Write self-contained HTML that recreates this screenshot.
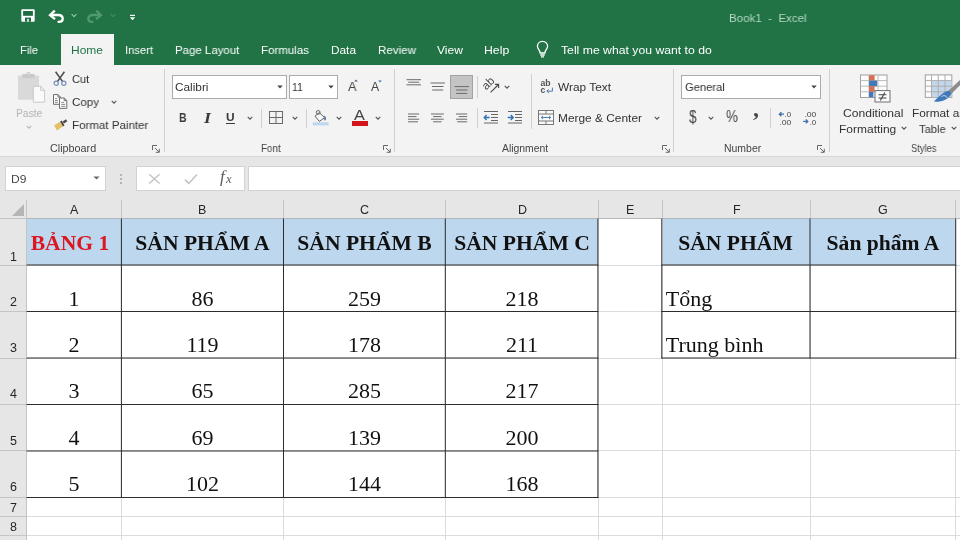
<!DOCTYPE html>
<html lang="vi"><head><meta charset="utf-8"><title>Book1 - Excel</title>
<style>
*{box-sizing:border-box;margin:0;padding:0}
html,body{width:960px;height:540px;overflow:hidden;background:#fff}
body{position:relative;font-family:"Liberation Sans",sans-serif;font-size:12px;color:#262626}
.abs,.t,.ic,.sep,.box,.gl,.bd,.hl,.cell,.rh,.ch{position:absolute}
.t{will-change:transform;white-space:pre;line-height:16px;transform-origin:0 0}
#title{left:0;top:0;width:960px;height:65px;background:#217346}
#hometab{left:61px;top:34px;width:53px;height:31px;background:#f3f3f3}
.tab{color:#fff;font-size:12.5px;top:42px}
#ribbon{left:0;top:65px;width:960px;height:92px;background:#f3f3f3}
#band{left:0;top:157px;width:960px;height:43px;background:#e6e6e6}
#bandtop{left:0;top:156px;width:960px;height:1px;background:#d6d6d6}
.sep{width:1px;background:#d2d2d2}
.box{background:#fff;border:1px solid #ababab}
.lbl{font-size:11px;color:#333}
.rt{font-size:12.5px;color:#262626}
/* sheet */
#sheet{left:0;top:200px;width:960px;height:340px;background:#fff}
.ch{top:200px;height:18px;background:#e6e6e6;color:#333;font-size:12.5px;text-align:center;line-height:19px;border-right:1px solid #c6c6c6}
.rh{left:0;width:26px;background:#e6e6e6;color:#333;font-size:12.5px;text-align:center;border-bottom:1px solid #c6c6c6}
.rh span{position:absolute;left:0;right:0;bottom:2px;line-height:14px}
.gl{background:#dbdbdb}
.bd{background:#2b2b2b}
.cell{will-change:transform;font-family:"Liberation Serif",serif;font-size:22px;line-height:24px;white-space:nowrap;color:#111;text-align:center}
.hdr{font-size:12.5px;color:#333}
</style></head><body>
<div class="abs" id="title"></div>
<div class="abs" id="hometab"></div>
<div class="abs" id="ribbon"></div>
<div class="abs" id="bandtop"></div>
<div class="abs" id="band"></div>
<span class="t" style="left:20.30px;top:41.71px;font-size:11.8px;color:#ffffff;transform:scaleX(0.9475);">File</span>
<span class="t" style="left:125.00px;top:41.71px;font-size:11.8px;color:#ffffff;transform:scaleX(0.9492);">Insert</span>
<span class="t" style="left:175.00px;top:41.71px;font-size:11.8px;color:#ffffff;transform:scaleX(0.9705);">Page Layout</span>
<span class="t" style="left:261.00px;top:41.71px;font-size:11.8px;color:#ffffff;transform:scaleX(0.9755);">Formulas</span>
<span class="t" style="left:330.70px;top:41.71px;font-size:11.8px;color:#ffffff;transform:scaleX(1.0017);">Data</span>
<span class="t" style="left:377.70px;top:41.71px;font-size:11.8px;color:#ffffff;transform:scaleX(0.9818);">Review</span>
<span class="t" style="left:436.70px;top:41.71px;font-size:11.8px;color:#ffffff;transform:scaleX(1.0248);">View</span>
<span class="t" style="left:484.20px;top:41.71px;font-size:11.8px;color:#ffffff;transform:scaleX(1.0392);">Help</span>
<span class="t" style="left:561.00px;top:41.71px;font-size:11.8px;color:#ffffff;transform:scaleX(1.0356);">Tell me what you want to do</span>
<span class="t" style="left:71.00px;top:41.71px;font-size:11.8px;color:#217346;transform:scaleX(1.0157);">Home</span>
<span class="t" style="left:728.70px;top:9.61px;font-size:11.8px;color:#b4d8c3;transform:scaleX(0.9779);">Book1  -  Excel</span>
<svg class="abs" style="left:21px;top:9.4px" width="14" height="13" viewBox="0 0 14 13">
<rect x="0.3" y="0.3" width="13.4" height="12.4" rx="1" fill="#fff"/>
<rect x="2.1" y="2" width="9.8" height="4.8" fill="#1f6b41"/>
<rect x="4" y="8.6" width="6" height="4.1" fill="#1f6b41"/><rect x="6.2" y="9.8" width="1.5" height="2.9" fill="#fff"/></svg>
<svg class="abs" style="left:48px;top:9px" width="18" height="15" viewBox="0 0 18 15" fill="none" stroke="#fff" stroke-width="2.3">
<path d="M6.8 1.6L2 6.1L7 10.2"/><path d="M2.4 6H10.2C13.2 6 14.7 7.7 14.7 9.7C14.7 11.8 13.2 12.9 10.9 12.9H9.6"/></svg>
<svg class="abs" style="left:71px;top:13px" width="6" height="5" viewBox="0 0 6 5" fill="none" stroke="#9cc9b0" stroke-width="1.1"><path d="M0.6 1L3 3.6L5.4 1"/></svg>
<svg class="abs" style="left:85.4px;top:9px" width="18" height="15" viewBox="0 0 18 15" fill="none" stroke="#4f9870" stroke-width="2.3">
<path d="M11.2 1.6L16 6.1L11 10.2"/><path d="M15.6 6H7.8C4.8 6 3.3 7.7 3.3 9.7C3.3 11.8 4.8 12.9 7.1 12.9H8.4"/></svg>
<svg class="abs" style="left:110px;top:13px" width="6" height="5" viewBox="0 0 6 5" fill="none" stroke="#438d63" stroke-width="1.1"><path d="M0.6 1L3 3.6L5.4 1"/></svg>
<svg class="abs" style="left:128.8px;top:14.4px" width="7" height="7" viewBox="0 0 7 7"><rect x="1" y="0.8" width="5" height="1.2" fill="#fff"/><path d="M0.8 3.2H6.2L3.5 6.2Z" fill="#fff"/></svg>
<svg class="abs" style="left:535px;top:40px" width="15" height="18" viewBox="0 0 15 18" fill="none" stroke="#fff" stroke-width="1.3">
<path d="M7.5 1.4C4.4 1.4 2.4 3.7 2.4 6.3C2.4 8.2 3.4 9.3 4.3 10.5C4.9 11.3 5.1 12 5.1 13H9.9C9.9 12 10.1 11.3 10.7 10.5C11.6 9.3 12.6 8.2 12.6 6.3C12.6 3.7 10.6 1.4 7.5 1.4Z"/><path d="M5.3 15H9.7M6 16.8H9"/></svg>
<svg class="abs" style="left:16px;top:70px" width="31" height="34" viewBox="0 0 31 34">
<rect x="2" y="5.4" width="21" height="24.4" rx="1" fill="#d9d9d9"/>
<path d="M6.4 8.2V4H10.2C10.2 1.2 14.8 1.2 14.8 4H18.6V8.2Z" fill="#c9c9c9"/><circle cx="12.5" cy="3.8" r="0.9" fill="#e8e8e8"/>
<path d="M17.3 16.3H24.6L28.6 20.3V32.2H17.3Z" fill="#fafafa" stroke="#c9c9c9" stroke-width="1"/>
<path d="M24.6 16.3V20.3H28.6" fill="none" stroke="#c9c9c9" stroke-width="1"/></svg>
<span class="t" style="left:15.60px;top:104.71px;font-size:11.8px;color:#b3b3b3;transform:scaleX(0.8757);">Paste</span>
<svg class="abs" style="left:24.8px;top:124.3px" width="8" height="6" viewBox="0 0 8 6" fill="none" stroke="#b8b8b8" stroke-width="1.1"><path d="M1.7000000000000002 1.8L4 4.2L6.3 1.8"/></svg>
<svg class="abs" style="left:52px;top:70px" width="16" height="17" viewBox="0 0 16 17" fill="none">
<path d="M3.6 1.8L10.6 11.6M12.4 1.8L5.4 11.6" stroke="#505050" stroke-width="1.6"/>
<circle cx="4.2" cy="13.2" r="2.1" stroke="#6f8fb8" stroke-width="1.2"/><circle cx="11.8" cy="13.2" r="2.1" stroke="#6f8fb8" stroke-width="1.2"/></svg>
<span class="t" style="left:72.00px;top:70.91px;font-size:11.8px;color:#333333;transform:scaleX(0.9374);">Cut</span>
<svg class="abs" style="left:52px;top:93px" width="17" height="17" viewBox="0 0 17 17" fill="none" stroke="#6e6e6e" stroke-width="1">
<path d="M1.5 1.6H6L8.5 4.1V11.3H1.5Z" fill="#fcfcfc"/><path d="M6 1.6V4.1H8.5" /><path d="M3 5.6H5.2M3 7.6H6M3 9.4H5.6" stroke="#8a8a8a"/>
<path d="M7.5 5H12.2L14.8 7.6V15.4H7.5Z" fill="#fcfcfc"/><path d="M12.2 5V7.6H14.8"/><path d="M9.2 9.4H12.2M9.2 11.4H13.2M9.2 13.4H13.2" stroke="#8a8a8a"/></svg>
<span class="t" style="left:72.10px;top:94.11px;font-size:11.8px;color:#333333;transform:scaleX(0.9799);">Copy</span>
<svg class="abs" style="left:109.5px;top:99px" width="8" height="6" viewBox="0 0 8 6" fill="none" stroke="#555" stroke-width="1.1"><path d="M1.7000000000000002 1.8L4 4.2L6.3 1.8"/></svg>
<svg class="abs" style="left:53px;top:118px" width="16" height="14" viewBox="0 0 16 14">
<path d="M1.2 7.4L7.2 3.6L9.9 8.6L3.9 12.4Z" fill="#e3bf67"/>
<path d="M7.2 3.6L8.8 2.6L11.5 7.6L9.9 8.6Z" fill="#4a4a4a"/>
<path d="M9.6 3.6L13 1.2L14.4 3.2L11 5.6Z" fill="#4a4a4a"/></svg>
<span class="t" style="left:72.00px;top:117.31px;font-size:11.8px;color:#333333;transform:scaleX(0.9788);">Format Painter</span>
<span class="t" style="left:49.80px;top:141.40px;font-size:10.4px;color:#444444;transform:scaleX(1.0379);">Clipboard</span>
<svg class="abs" style="left:152px;top:144.5px" width="8" height="8" viewBox="0 0 8 8" fill="none" stroke="#666" stroke-width="1"><path d="M0.5 5V0.5H5"/><path d="M3 3L7 7"/><path d="M7.3 3.8V7.3H3.8" /></svg>
<div class="abs" style="left:164px;top:69px;width:1px;height:83px;background:#d0d0d0"></div>
<div class="box" style="left:172px;top:75px;width:115px;height:24px"></div>
<div class="box" style="left:289px;top:75px;width:49px;height:24px"></div>
<span class="t" style="left:174.50px;top:79.21px;font-size:11.8px;color:#333333;transform:scaleX(1.0014);">Calibri</span>
<svg class="abs" style="left:277px;top:85px" width="6" height="4" viewBox="0 0 6 4"><path d="M0.3 0.5H5.7L3 3.5Z" fill="#444"/></svg>
<span class="t" style="left:292.30px;top:79.21px;font-size:11.8px;color:#333333;transform:scaleX(0.8719);">11</span>
<svg class="abs" style="left:328px;top:85px" width="6" height="4" viewBox="0 0 6 4"><path d="M0.3 0.5H5.7L3 3.5Z" fill="#444"/></svg>
<span class="t" style="left:347.50px;top:78.52px;font-size:13.5px;color:#444;transform:scaleX(0.9397);">A</span>
<svg class="abs" style="left:354.2px;top:79.2px" width="4" height="3" viewBox="0 0 4 3"><path d="M0.2 2.6L2 0.4L3.8 2.6Z" fill="#4a607c"/></svg>
<span class="t" style="left:370.60px;top:79.44px;font-size:12px;color:#444;transform:scaleX(1.0199);">A</span>
<svg class="abs" style="left:377.5px;top:79.6px" width="4" height="3" viewBox="0 0 4 3"><path d="M0.2 0.4L2 2.6L3.8 0.4Z" fill="#3f74b4"/></svg>
<span class="t" style="left:178.60px;top:109.69px;font-size:13.6px;color:#3a3a3a;transform:scaleX(0.7761);font-weight:bold;">B</span>
<span class="t" style="left:204.00px;top:109.61px;font-size:14.2px;color:#3a3a3a;transform:scaleX(1.2640);font-weight:bold;font-family:'Liberation Serif',serif;font-style:italic;">I</span>
<span class="t" style="left:226.20px;top:109.11px;font-size:11.8px;color:#3a3a3a;transform:scaleX(1.0122);font-weight:bold;">U</span>
<div class="abs" style="left:226px;top:123px;width:9px;height:1px;background:#3a3a3a"></div>
<svg class="abs" style="left:245.5px;top:115px" width="8" height="6" viewBox="0 0 8 6" fill="none" stroke="#555" stroke-width="1.1"><path d="M1.7000000000000002 1.8L4 4.2L6.3 1.8"/></svg>
<div class="abs" style="left:261px;top:109px;width:1px;height:19px;background:#d0d0d0"></div>
<svg class="abs" style="left:268px;top:110px" width="16" height="15" viewBox="0 0 16 15" fill="none" stroke="#6a6a6a" stroke-width="1"><rect x="1.5" y="1.5" width="13" height="12"/><path d="M8 1.5V13.5M1.5 7.5H14.5"/></svg>
<svg class="abs" style="left:290.5px;top:115px" width="8" height="6" viewBox="0 0 8 6" fill="none" stroke="#555" stroke-width="1.1"><path d="M1.7000000000000002 1.8L4 4.2L6.3 1.8"/></svg>
<div class="abs" style="left:306px;top:109px;width:1px;height:19px;background:#d0d0d0"></div>
<svg class="abs" style="left:312px;top:108.5px" width="18" height="17" viewBox="0 0 18 17" fill="none">
<path d="M7.2 3.6L12.6 8.6L7.4 12.4L3 7.2Z" fill="#fafafa" stroke="#5a5a5a" stroke-width="1"/>
<circle cx="6.2" cy="3.4" r="1.9" stroke="#5a5a5a" stroke-width="0.9"/>
<path d="M12 6.6C13.4 7 14 8.2 14 9.6C14 10.6 13.6 11.4 12.9 11.4C12.2 11.4 11.9 10.6 12.2 9.8L12.6 8.6Z" fill="#4f6f94"/>
<rect x="0.8" y="13.2" width="15.8" height="3.2" fill="#bdd7ee"/></svg>
<svg class="abs" style="left:335px;top:115px" width="8" height="6" viewBox="0 0 8 6" fill="none" stroke="#555" stroke-width="1.1"><path d="M1.7000000000000002 1.8L4 4.2L6.3 1.8"/></svg>
<span class="t" style="left:354.30px;top:107.35px;font-size:14px;color:#444;transform:scaleX(1.1620);">A</span>
<div class="abs" style="left:352px;top:121px;width:16px;height:4.5px;background:#d4141c"></div>
<svg class="abs" style="left:374px;top:115px" width="8" height="6" viewBox="0 0 8 6" fill="none" stroke="#555" stroke-width="1.1"><path d="M1.7000000000000002 1.8L4 4.2L6.3 1.8"/></svg>
<span class="t" style="left:260.50px;top:141.40px;font-size:10.4px;color:#444444;transform:scaleX(0.9375);">Font</span>
<svg class="abs" style="left:382.5px;top:144.5px" width="8" height="8" viewBox="0 0 8 8" fill="none" stroke="#666" stroke-width="1"><path d="M0.5 5V0.5H5"/><path d="M3 3L7 7"/><path d="M7.3 3.8V7.3H3.8" /></svg>
<div class="abs" style="left:394px;top:69px;width:1px;height:83px;background:#d0d0d0"></div>
<svg class="abs" style="left:0;top:0" width="960" height="160" viewBox="0 0 960 160" fill="none" stroke="#6a6a6a" stroke-width="1"><path d="M406.5 79.7H421.0M408.2 82.2H419.2M406.5 84.8H421.0"/></svg>
<svg class="abs" style="left:0;top:0" width="960" height="160" viewBox="0 0 960 160" fill="none" stroke="#6a6a6a" stroke-width="1"><path d="M430.5 83.0H445.0M432.0 86.5H443.5M432.2 90.0H443.2"/></svg>
<div class="abs" style="left:450px;top:75px;width:23px;height:23.5px;background:#c4c4c4;border:1px solid #a2a2a2"></div>
<svg class="abs" style="left:0;top:0" width="960" height="160" viewBox="0 0 960 160" fill="none" stroke="#6a6a6a" stroke-width="1"><path d="M454.5 86.6H469.0M456.0 90.0H467.5M456.2 93.4H467.2"/></svg>
<div class="abs" style="left:477px;top:76px;width:1px;height:22px;background:#d0d0d0"></div>
<svg class="abs" style="left:482px;top:77px" width="19" height="18" viewBox="0 0 19 18" fill="none">
<text x="0" y="0" font-family="Liberation Sans, sans-serif" font-size="11.5" fill="#4a4a4a" transform="translate(4.2 13.6) rotate(-45)">ab</text>
<path d="M8.6 15.4L16 8" stroke="#4a4a4a" stroke-width="1.1"/><path d="M13 7.4H16.6V11" stroke="#4a4a4a" stroke-width="1.1"/></svg>
<svg class="abs" style="left:503px;top:83.5px" width="8" height="6" viewBox="0 0 8 6" fill="none" stroke="#555" stroke-width="1.1"><path d="M1.7000000000000002 1.8L4 4.2L6.3 1.8"/></svg>
<div class="abs" style="left:530.5px;top:74px;width:1px;height:55px;background:#d0d0d0"></div>
<svg class="abs" style="left:539px;top:77.5px" width="16" height="17" viewBox="0 0 16 17" fill="none">
<text x="1.4" y="8.4" font-family="Liberation Sans, sans-serif" font-size="8.6" font-weight="bold" fill="#555" textLength="10.2" lengthAdjust="spacingAndGlyphs">ab</text>
<text x="1.4" y="15.2" font-family="Liberation Sans, sans-serif" font-size="8.6" font-weight="bold" fill="#555">c</text>
<path d="M13.4 9.6V13.2H8" stroke="#4c78b4" stroke-width="1"/><path d="M9.8 11.4L7.8 13.2L9.8 15" stroke="#4c78b4" stroke-width="1"/></svg>
<span class="t" style="left:558.00px;top:78.61px;font-size:11.8px;color:#333333;transform:scaleX(1.0059);">Wrap Text</span>
<svg class="abs" style="left:0;top:0" width="960" height="160" viewBox="0 0 960 160" fill="none" stroke="#6a6a6a" stroke-width="1"><path d="M408.0 114.0H419.2M408.0 116.6H416.5M408.0 119.2H419.2M408.0 121.8H418.0"/></svg>
<svg class="abs" style="left:0;top:0" width="960" height="160" viewBox="0 0 960 160" fill="none" stroke="#6a6a6a" stroke-width="1"><path d="M431.0 114.0H443.8M433.1 116.6H441.6M431.0 119.2H443.8M433.1 121.8H441.6"/></svg>
<svg class="abs" style="left:0;top:0" width="960" height="160" viewBox="0 0 960 160" fill="none" stroke="#6a6a6a" stroke-width="1"><path d="M456.0 114.0H467.2M458.7 116.6H467.2M456.0 119.2H467.2M457.2 121.8H467.2"/></svg>
<div class="abs" style="left:477px;top:108px;width:1px;height:20px;background:#d0d0d0"></div>
<svg class="abs" style="left:483px;top:110px" width="16" height="14" viewBox="0 0 16 14" fill="none">
<path d="M1 1.5H15M8 4.5H15M8 7.5H15M8 10.5H15M1 13H15" stroke="#666" stroke-width="1"/>
<path d="M6.6 7.5H1.2M3.6 5L1.2 7.5L3.6 10" stroke="#2f6db5" stroke-width="1.3"/></svg>
<svg class="abs" style="left:507px;top:110px" width="16" height="14" viewBox="0 0 16 14" fill="none">
<path d="M1 1.5H15M8 4.5H15M8 7.5H15M8 10.5H15M1 13H15" stroke="#666" stroke-width="1"/>
<path d="M0.8 7.5H6.2M3.8 5L6.2 7.5L3.8 10" stroke="#2f6db5" stroke-width="1.3"/></svg>
<svg class="abs" style="left:538px;top:109px" width="17" height="16" viewBox="0 0 17 16" fill="none" stroke="#777" stroke-width="1">
<rect x="0.5" y="1.5" width="15" height="14" fill="#fafafa"/><path d="M0.5 5H15.5M0.5 12H15.5M8 1.5V5M8 12V15.5"/>
<path d="M3.2 8.5H12.8M5 6.8L3.2 8.5L5 10.2M11 6.8L12.8 8.5L11 10.2" stroke="#4f7fb8"/></svg>
<span class="t" style="left:558.00px;top:109.91px;font-size:11.8px;color:#333333;transform:scaleX(1.0083);">Merge &amp; Center</span>
<svg class="abs" style="left:652.5px;top:115px" width="8" height="6" viewBox="0 0 8 6" fill="none" stroke="#555" stroke-width="1.1"><path d="M1.7000000000000002 1.8L4 4.2L6.3 1.8"/></svg>
<span class="t" style="left:501.80px;top:141.40px;font-size:10.4px;color:#444444;transform:scaleX(0.9929);">Alignment</span>
<svg class="abs" style="left:662px;top:144.5px" width="8" height="8" viewBox="0 0 8 8" fill="none" stroke="#666" stroke-width="1"><path d="M0.5 5V0.5H5"/><path d="M3 3L7 7"/><path d="M7.3 3.8V7.3H3.8" /></svg>
<div class="abs" style="left:673px;top:69px;width:1px;height:83px;background:#d0d0d0"></div>
<div class="box" style="left:681px;top:75px;width:140px;height:24px"></div>
<span class="t" style="left:684.50px;top:79.21px;font-size:11.8px;color:#333333;transform:scaleX(0.9498);">General</span>
<svg class="abs" style="left:810.5px;top:85px" width="6" height="4" viewBox="0 0 6 4"><path d="M0.3 0.5H5.7L3 3.5Z" fill="#444"/></svg>
<span class="t" style="left:688.70px;top:109.24px;font-size:17.5px;color:#484848;transform:scaleX(0.7825);">$</span>
<svg class="abs" style="left:706.8px;top:115px" width="8" height="6" viewBox="0 0 8 6" fill="none" stroke="#555" stroke-width="1.1"><path d="M1.7000000000000002 1.8L4 4.2L6.3 1.8"/></svg>
<span class="t" style="left:726.00px;top:109.26px;font-size:16px;color:#484848;transform:scaleX(0.8427);">%</span>
<span class="t" style="left:752.80px;top:101.44px;font-size:23px;color:#484848;transform:scaleX(1.0435);font-weight:bold;font-family:'Liberation Serif',serif;">,</span>
<div class="abs" style="left:770px;top:108px;width:1px;height:20px;background:#d0d0d0"></div>
<svg class="abs" style="left:778px;top:110px" width="15" height="16" viewBox="0 0 15 16">
<path d="M6 4.2H1.4M3.4 2.2L1.4 4.2L3.4 6.2" stroke="#3d6ea8" stroke-width="1.3" fill="none"/>
<text x="6.6" y="7.4" font-family="Liberation Sans, sans-serif" font-size="7.8" fill="#444">.0</text>
<text x="1.4" y="14.6" font-family="Liberation Sans, sans-serif" font-size="7.8" fill="#444" textLength="12" lengthAdjust="spacingAndGlyphs">.00</text></svg>
<svg class="abs" style="left:802px;top:110px" width="15" height="16" viewBox="0 0 15 16">
<text x="2.4" y="7.4" font-family="Liberation Sans, sans-serif" font-size="7.8" fill="#444" textLength="12" lengthAdjust="spacingAndGlyphs">.00</text>
<path d="M1.2 11.4H5.8M3.8 9.4L5.8 11.4L3.8 13.4" stroke="#3d6ea8" stroke-width="1.3" fill="none"/>
<text x="7.6" y="14.6" font-family="Liberation Sans, sans-serif" font-size="7.8" fill="#444">.0</text></svg>
<span class="t" style="left:723.80px;top:141.40px;font-size:10.4px;color:#444444;transform:scaleX(1.0062);">Number</span>
<svg class="abs" style="left:817px;top:144.5px" width="8" height="8" viewBox="0 0 8 8" fill="none" stroke="#666" stroke-width="1"><path d="M0.5 5V0.5H5"/><path d="M3 3L7 7"/><path d="M7.3 3.8V7.3H3.8" /></svg>
<div class="abs" style="left:828.5px;top:69px;width:1px;height:83px;background:#d0d0d0"></div>
<svg class="abs" style="left:859px;top:74px" width="33" height="30" viewBox="0 0 33 30">
<rect x="1.5" y="1" width="26.5" height="22.5" fill="#fdfdfd" stroke="#a0a0a0" stroke-width="1"/>
<path d="M1.5 6.6H28M1.5 12.2H28M1.5 17.8H28M10 1V23.5M19 1V23.5" stroke="#bcbcbc" stroke-width="1" fill="none"/>
<rect x="10" y="1.2" width="5.6" height="5.4" fill="#d86f52"/>
<rect x="10" y="6.6" width="8.2" height="5.6" fill="#4279b8"/>
<rect x="10" y="12.2" width="5.6" height="5.6" fill="#d86f52"/>
<rect x="10" y="17.8" width="4.4" height="5.4" fill="#4279b8"/>
<rect x="16" y="16.6" width="15" height="11.4" fill="#fbfbfb" stroke="#707070" stroke-width="1"/>
<path d="M19.6 20.8H27.4M19.6 24H27.4M25.8 18.4L21.4 26.4" stroke="#444" stroke-width="1.1" fill="none"/></svg>
<span class="t" style="left:842.50px;top:104.81px;font-size:11.8px;color:#333333;transform:scaleX(1.0244);">Conditional</span>
<span class="t" style="left:838.70px;top:120.71px;font-size:11.8px;color:#333333;transform:scaleX(1.0159);">Formatting</span>
<svg class="abs" style="left:900.3px;top:124.6px" width="8" height="6" viewBox="0 0 8 6" fill="none" stroke="#555" stroke-width="1.1"><path d="M1.7000000000000002 1.8L4 4.2L6.3 1.8"/></svg>
<svg class="abs" style="left:924px;top:74px" width="36" height="30" viewBox="0 0 36 30">
<rect x="1.3" y="0.9" width="26.5" height="22.5" fill="#fdfdfd" stroke="#a0a0a0" stroke-width="1"/>
<rect x="7.5" y="6.8" width="20" height="16.4" fill="#c3d7ec"/>
<path d="M1.3 6.6H27.8M1.3 12.2H27.8M1.3 17.8H27.8M7.5 1V23.4M14.2 1V23.4M21 1V23.4" stroke="#adadad" stroke-width="1" fill="none"/>
<path d="M36.5 5.6L38.8 8.4L26.6 20.4L23.6 17.4Z" fill="#8c8c8c"/>
<path d="M25.2 16.8C21 16.8 18 20 9.8 27.5C16 28.3 24.6 26.2 27.4 19.4Z" fill="#3f79b9"/>
<path d="M17.5 22.5C20 21 22 21.5 23.5 24" stroke="#dfe9f4" stroke-width="0.9" fill="none"/></svg>
<span class="t" style="left:912.10px;top:104.81px;font-size:11.8px;color:#333333;transform:scaleX(0.9945);">Format as</span>
<span class="t" style="left:919.10px;top:120.71px;font-size:11.8px;color:#333333;transform:scaleX(0.9432);">Table</span>
<svg class="abs" style="left:949.6px;top:124.6px" width="8" height="6" viewBox="0 0 8 6" fill="none" stroke="#555" stroke-width="1.1"><path d="M1.7000000000000002 1.8L4 4.2L6.3 1.8"/></svg>
<span class="t" style="left:910.60px;top:141.40px;font-size:10.4px;color:#444444;transform:scaleX(0.9033);">Styles</span>
<div class="abs" style="left:5px;top:166px;width:101px;height:25px;background:#fff;border:1px solid #d2d2d2"></div>
<div class="abs" style="left:136px;top:166px;width:109px;height:25px;background:#fff;border:1px solid #d2d2d2"></div>
<div class="abs" style="left:248px;top:166px;width:720px;height:25px;background:#fff;border:1px solid #d2d2d2"></div>
<span class="t" style="left:11.20px;top:170.91px;font-size:11.8px;color:#444;transform:scaleX(1.0196);">D9</span>
<svg class="abs" style="left:93px;top:176px" width="7" height="4" viewBox="0 0 7 4"><path d="M0.4 0.4H6.6L3.5 3.6Z" fill="#666"/></svg>
<div class="abs" style="left:120px;top:173.5px;width:2px;height:2px;border-radius:1px;background:#a2a2a2"></div>
<div class="abs" style="left:120px;top:177.5px;width:2px;height:2px;border-radius:1px;background:#a2a2a2"></div>
<div class="abs" style="left:120px;top:181.5px;width:2px;height:2px;border-radius:1px;background:#a2a2a2"></div>
<svg class="abs" style="left:148px;top:173px" width="13" height="12" viewBox="0 0 13 12" fill="none" stroke="#c2c2c2" stroke-width="1.3"><path d="M1.2 1.2L11.6 10.6M11.6 1.2L1.2 10.6"/></svg>
<svg class="abs" style="left:184px;top:173px" width="14" height="12" viewBox="0 0 14 12" fill="none" stroke="#c2c2c2" stroke-width="1.5"><path d="M1 6.6L4.8 10.4L13 1.4"/></svg>
<span class="t" style="left:219.6px;top:167.2px;font-size:17px;line-height:20px;color:#5c5c5c;font-family:'Liberation Serif',serif;font-style:italic">f</span>
<span class="t" style="left:226.2px;top:171.4px;font-size:12.5px;line-height:16px;color:#5c5c5c;font-family:'Liberation Serif',serif;font-style:italic">x</span>
<div class="abs" id="sheet"></div>
<div class="abs" style="left:0;top:200px;width:960px;height:18px;background:#e6e6e6"></div>
<div class="abs" style="left:0;top:218px;width:26px;height:322px;background:#e6e6e6"></div>
<svg class="abs" style="left:12px;top:204px" width="12" height="12" viewBox="0 0 12 12"><path d="M12 0V12H0Z" fill="#b5b5b5"/></svg>
<div class="gl" style="left:26px;top:219px;width:1px;height:321px"></div>
<div class="gl" style="left:121px;top:219px;width:1px;height:321px"></div>
<div class="gl" style="left:283px;top:219px;width:1px;height:321px"></div>
<div class="gl" style="left:445px;top:219px;width:1px;height:321px"></div>
<div class="gl" style="left:598px;top:219px;width:1px;height:321px"></div>
<div class="gl" style="left:662px;top:219px;width:1px;height:321px"></div>
<div class="gl" style="left:810px;top:219px;width:1px;height:321px"></div>
<div class="gl" style="left:955px;top:219px;width:1px;height:321px"></div>
<div class="gl" style="left:27px;top:218px;width:933px;height:1px"></div>
<div class="gl" style="left:27px;top:265px;width:933px;height:1px"></div>
<div class="gl" style="left:27px;top:311px;width:933px;height:1px"></div>
<div class="gl" style="left:27px;top:358px;width:933px;height:1px"></div>
<div class="gl" style="left:27px;top:404px;width:933px;height:1px"></div>
<div class="gl" style="left:27px;top:450px;width:933px;height:1px"></div>
<div class="gl" style="left:27px;top:497px;width:933px;height:1px"></div>
<div class="gl" style="left:27px;top:516px;width:933px;height:1px"></div>
<div class="gl" style="left:27px;top:535px;width:933px;height:1px"></div>
<div class="abs" style="left:26px;top:200px;width:1px;height:18px;background:#c4c4c4"></div>
<div class="abs" style="left:121px;top:200px;width:1px;height:18px;background:#c4c4c4"></div>
<div class="abs" style="left:283px;top:200px;width:1px;height:18px;background:#c4c4c4"></div>
<div class="abs" style="left:445px;top:200px;width:1px;height:18px;background:#c4c4c4"></div>
<div class="abs" style="left:598px;top:200px;width:1px;height:18px;background:#c4c4c4"></div>
<div class="abs" style="left:662px;top:200px;width:1px;height:18px;background:#c4c4c4"></div>
<div class="abs" style="left:810px;top:200px;width:1px;height:18px;background:#c4c4c4"></div>
<div class="abs" style="left:955px;top:200px;width:1px;height:18px;background:#c4c4c4"></div>
<div class="abs" style="left:0;top:218px;width:960px;height:1px;background:#b2b5ba"></div>
<div class="abs" style="left:26px;top:218px;width:1px;height:322px;background:#c4c4c4"></div>
<div class="abs" style="left:0;top:218px;width:26px;height:1px;background:#c4c4c4"></div>
<div class="abs" style="left:0;top:265px;width:26px;height:1px;background:#c4c4c4"></div>
<div class="abs" style="left:0;top:311px;width:26px;height:1px;background:#c4c4c4"></div>
<div class="abs" style="left:0;top:358px;width:26px;height:1px;background:#c4c4c4"></div>
<div class="abs" style="left:0;top:404px;width:26px;height:1px;background:#c4c4c4"></div>
<div class="abs" style="left:0;top:450px;width:26px;height:1px;background:#c4c4c4"></div>
<div class="abs" style="left:0;top:497px;width:26px;height:1px;background:#c4c4c4"></div>
<div class="abs" style="left:0;top:516px;width:26px;height:1px;background:#c4c4c4"></div>
<div class="abs" style="left:0;top:535px;width:26px;height:1px;background:#c4c4c4"></div>
<span class="t" style="left:69.81px;top:201.87px;font-size:12.5px;color:#262626;transform:scaleX(1.0000);">A</span>
<span class="t" style="left:198.34px;top:201.87px;font-size:12.5px;color:#262626;transform:scaleX(1.0000);">B</span>
<span class="t" style="left:360.00px;top:201.87px;font-size:12.5px;color:#262626;transform:scaleX(1.0000);">C</span>
<span class="t" style="left:517.50px;top:201.87px;font-size:12.5px;color:#262626;transform:scaleX(1.0000);">D</span>
<span class="t" style="left:626.34px;top:201.87px;font-size:12.5px;color:#262626;transform:scaleX(1.0000);">E</span>
<span class="t" style="left:732.69px;top:201.87px;font-size:12.5px;color:#262626;transform:scaleX(1.0000);">F</span>
<span class="t" style="left:878.12px;top:201.87px;font-size:12.5px;color:#262626;transform:scaleX(1.0000);">G</span>
<span class="t" style="left:9.73px;top:249.17px;font-size:12.5px;color:#262626;transform:scaleX(1.0000);">1</span>
<span class="t" style="left:9.73px;top:293.97px;font-size:12.5px;color:#262626;transform:scaleX(1.0000);">2</span>
<span class="t" style="left:9.73px;top:339.97px;font-size:12.5px;color:#262626;transform:scaleX(1.0000);">3</span>
<span class="t" style="left:9.73px;top:386.37px;font-size:12.5px;color:#262626;transform:scaleX(1.0000);">4</span>
<span class="t" style="left:9.73px;top:433.07px;font-size:12.5px;color:#262626;transform:scaleX(1.0000);">5</span>
<span class="t" style="left:9.73px;top:479.37px;font-size:12.5px;color:#262626;transform:scaleX(1.0000);">6</span>
<span class="t" style="left:9.73px;top:500.17px;font-size:12.5px;color:#262626;transform:scaleX(1.0000);">7</span>
<span class="t" style="left:9.73px;top:519.37px;font-size:12.5px;color:#262626;transform:scaleX(1.0000);">8</span>
<span class="t" style="left:9.73px;top:537.72px;font-size:12.5px;color:#262626;transform:scaleX(1.0000);">9</span>
<div class="abs" style="left:27px;top:219px;width:571px;height:46px;background:#bdd7ee"></div>
<div class="abs" style="left:663px;top:219px;width:292px;height:46px;background:#bdd7ee"></div>
<svg class="abs" style="left:0;top:0" width="960" height="540" viewBox="0 0 960 540"><rect x="120.90" y="218.6" width="1" height="279.40" fill="#2c2c2c"/><rect x="283.00" y="218.6" width="1" height="279.40" fill="#2c2c2c"/><rect x="444.80" y="218.6" width="1" height="279.40" fill="#2c2c2c"/><rect x="597.40" y="218.6" width="1" height="279.40" fill="#2c2c2c"/><rect x="26.6" y="264.50" width="571.80" height="1" fill="#2c2c2c"/><rect x="26.6" y="311.00" width="571.80" height="1" fill="#2c2c2c"/><rect x="26.6" y="357.50" width="571.80" height="1" fill="#2c2c2c"/><rect x="26.6" y="404.00" width="571.80" height="1" fill="#2c2c2c"/><rect x="26.6" y="450.50" width="571.80" height="1" fill="#2c2c2c"/><rect x="26.6" y="497.00" width="571.80" height="1" fill="#2c2c2c"/><rect x="661.30" y="218.6" width="1" height="139.90" fill="#2c2c2c"/><rect x="809.50" y="218.6" width="1" height="139.90" fill="#2c2c2c"/><rect x="955.20" y="218.6" width="1" height="139.90" fill="#2c2c2c"/><rect x="661.30" y="264.50" width="294.90" height="1" fill="#2c2c2c"/><rect x="661.30" y="311.00" width="294.90" height="1" fill="#2c2c2c"/><rect x="661.30" y="357.50" width="294.90" height="1" fill="#2c2c2c"/></svg>
<div class="cell" style="left:23px;width:94px;top:231.08px;text-align:center;font-weight:bold;font-size:21.6px;color:#dc1720;">BẢNG 1</div>
<div class="cell" style="left:122px;width:161px;top:231.08px;text-align:center;font-weight:bold;font-size:21.6px;">SẢN PHẨM A</div>
<div class="cell" style="left:284px;width:161px;top:231.08px;text-align:center;font-weight:bold;font-size:21.6px;">SẢN PHẨM B</div>
<div class="cell" style="left:446px;width:152px;top:231.08px;text-align:center;font-weight:bold;font-size:21.6px;">SẢN PHẨM C</div>
<div class="cell" style="left:662px;width:147px;top:231.08px;text-align:center;font-weight:bold;font-size:21.6px;">SẢN PHẨM</div>
<div class="cell" style="left:810.6px;width:144px;top:231.08px;text-align:center;font-weight:bold;font-size:21.6px;">Sản phẩm A</div>
<div class="cell" style="left:27px;width:94px;top:286.98px;text-align:center;">1</div>
<div class="cell" style="left:122px;width:161px;top:286.98px;text-align:center;">86</div>
<div class="cell" style="left:284px;width:161px;top:286.98px;text-align:center;">259</div>
<div class="cell" style="left:446px;width:152px;top:286.98px;text-align:center;">218</div>
<div class="cell" style="left:27px;width:94px;top:332.98px;text-align:center;">2</div>
<div class="cell" style="left:122px;width:161px;top:332.98px;text-align:center;">119</div>
<div class="cell" style="left:284px;width:161px;top:332.98px;text-align:center;">178</div>
<div class="cell" style="left:446px;width:152px;top:332.98px;text-align:center;">211</div>
<div class="cell" style="left:27px;width:94px;top:379.48px;text-align:center;">3</div>
<div class="cell" style="left:122px;width:161px;top:379.48px;text-align:center;">65</div>
<div class="cell" style="left:284px;width:161px;top:379.48px;text-align:center;">285</div>
<div class="cell" style="left:446px;width:152px;top:379.48px;text-align:center;">217</div>
<div class="cell" style="left:27px;width:94px;top:425.98px;text-align:center;">4</div>
<div class="cell" style="left:122px;width:161px;top:425.98px;text-align:center;">69</div>
<div class="cell" style="left:284px;width:161px;top:425.98px;text-align:center;">139</div>
<div class="cell" style="left:446px;width:152px;top:425.98px;text-align:center;">200</div>
<div class="cell" style="left:27px;width:94px;top:471.98px;text-align:center;">5</div>
<div class="cell" style="left:122px;width:161px;top:471.98px;text-align:center;">102</div>
<div class="cell" style="left:284px;width:161px;top:471.98px;text-align:center;">144</div>
<div class="cell" style="left:446px;width:152px;top:471.98px;text-align:center;">168</div>
<div class="cell" style="left:663px;width:147px;top:286.98px;text-align:left;padding-left:2.8px;">Tổng</div>
<div class="cell" style="left:663px;width:147px;top:332.98px;text-align:left;padding-left:2.8px;">Trung bình</div>
</body></html>
